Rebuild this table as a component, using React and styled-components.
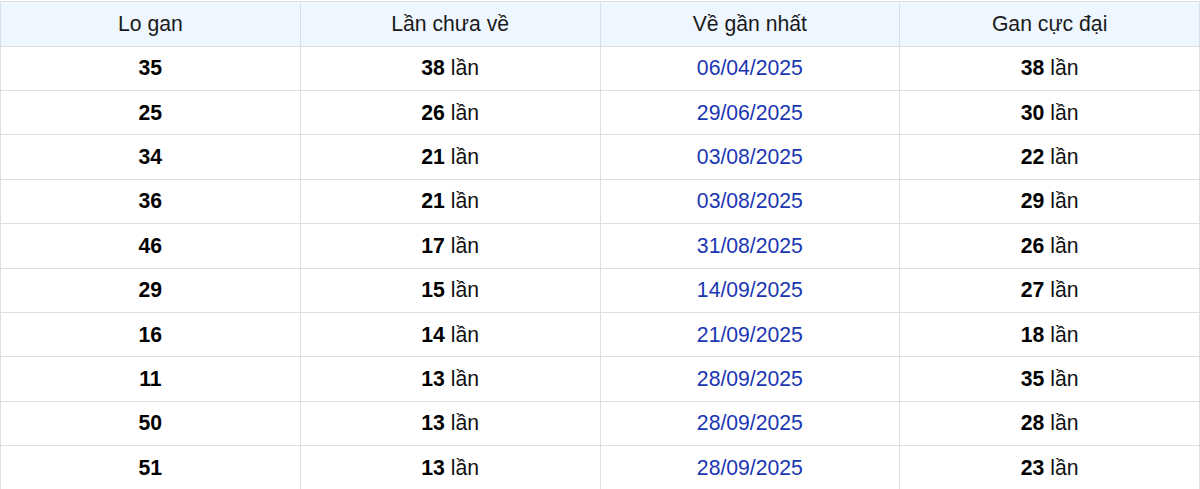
import React from "react";
import styled, { createGlobalStyle } from "styled-components";

const Global = createGlobalStyle`
  html, body { margin: 0; padding: 0; background: #fff; }
  body { font-family: "Liberation Sans", Arial, sans-serif; }
`;

const Wrap = styled.div`
  padding-top: 1px;
`;

const Table = styled.table`
  width: 100%;
  border-collapse: collapse;
  table-layout: fixed;
  font-family: "Liberation Sans", Arial, sans-serif;
  font-size: 21.2px;
  color: #111;
`;

const Th = styled.th`
  background: #eef6ff;
  font-weight: 400;
  height: 43.6px;
  padding: 0;
  border: 1px solid #dedfe5;
  text-align: center;
  color: #1a1a1a;
`;

const Row = styled.tr`
  height: 44.4px;
`;

const Td = styled.td`
  padding: 0;
  border: 1px solid #dedfe5;
  text-align: center;
  color: ${(p) => (p.$blue ? "#1a36b2" : "#111")};
`;

const B = styled.b`
  font-weight: 700;
  color: #000;
`;

const rows = [
  ["35", "38", "06/04/2025", "38"],
  ["25", "26", "29/06/2025", "30"],
  ["34", "21", "03/08/2025", "22"],
  ["36", "21", "03/08/2025", "29"],
  ["46", "17", "31/08/2025", "26"],
  ["29", "15", "14/09/2025", "27"],
  ["16", "14", "21/09/2025", "18"],
  ["11", "13", "28/09/2025", "35"],
  ["50", "13", "28/09/2025", "28"],
  ["51", "13", "28/09/2025", "23"],
];

export default function App() {
  return (
    <Wrap>
      <Global />
      <Table>
        <thead>
          <tr>
            <Th>Lo gan</Th>
            <Th>Lần chưa về</Th>
            <Th>Về gần nhất</Th>
            <Th>Gan cực đại</Th>
          </tr>
        </thead>
        <tbody>
          {rows.map((r, i) => (
            <Row key={i}>
              <Td><B>{r[0]}</B></Td>
              <Td><B>{r[1]}</B> lần</Td>
              <Td $blue>{r[2]}</Td>
              <Td><B>{r[3]}</B> lần</Td>
            </Row>
          ))}
        </tbody>
      </Table>
    </Wrap>
  );
}
